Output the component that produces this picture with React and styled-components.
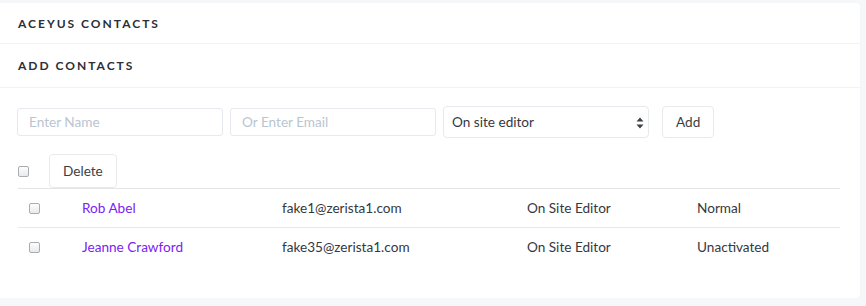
import React from "react";
import styled, { createGlobalStyle } from "styled-components";

const Global = createGlobalStyle`
body {
  margin: 0;
  background: #f5f7f9;
  font-family: Lato, "Open Sans", sans-serif;
  color: #35383f;
}
`;

const Page = styled.div`
padding-top: 3px;
width: 860px;
`;

const Card = styled.div`
background: #ffffff;
border-radius: 0 4px 4px 0;
box-shadow: 0 1px 2px rgba(0, 0, 0, 0.04);
padding-bottom: 32px;
`;

const SectionHead = styled.div`
height: ${({ h }) => h}px;
display: flex;
align-items: center;
padding-left: 18px;
border-bottom: 1px solid #eef3fa;
font-size: 12px;
font-weight: 700;
letter-spacing: 2px;
color: #2b2e36;
`;

const Body = styled.div`
padding: 18px 20px 0 17px;
`;

const FormRow = styled.div`
display: flex;
align-items: center;
gap: 7px;
`;

const Field = styled.input`
width: 206px;
height: 28px;
box-sizing: border-box;
border: 1px solid #e6eaee;
border-radius: 3px;
padding: 0 11px;
font-family: inherit;
font-size: 13.6px;
color: #35383f;
&::placeholder { color: #b9c5d1; }
`;

const SelectBox = styled.div`
position: relative;
width: 206px;
height: 32px;
box-sizing: border-box;
border: 1px solid #e6eaee;
border-radius: 4px;
display: flex;
align-items: center;
padding: 0 8px;
font-size: 13.6px;
color: #35383f;
`;

const Arrows = styled.svg`
position: absolute;
right: 4px;
top: 10px;
`;

const Btn = styled.button`
height: ${({ h }) => h || 32}px;
padding: 0 ${({ px }) => px || 13}px;
margin-left: ${({ ml }) => ml || 0}px;
background: #fff;
border: 1px solid #e8ebee;
border-radius: 4px;
font-family: inherit;
font-size: 13.6px;
color: #3b3e46;
cursor: pointer;
`;

const Toolbar = styled.div`
display: flex;
align-items: center;
margin-top: 16px;
padding-left: 1px;
height: 34px;
`;

const Check = styled.span`
display: inline-block;
width: 9px;
height: 9px;
border: 1px solid #a9adb2;
border-radius: 2px;
background: linear-gradient(#fdfdfd, #e9eaec);
`;

const Table = styled.div`
width: 822px;
margin-left: 1px;
`;

const Row = styled.div`
display: grid;
grid-template-columns: 64px 200px 245px 170px 1fr;
align-items: center;
height: 38px;
border-top: 1px solid ${({ first }) => (first ? "#e2e4e6" : "#e6e8ea")};
font-size: 13.6px;
color: #35383f;
`;

const CheckCell = styled.div`
padding-left: 11px;
display: flex;
align-items: center;
`;

const NameLink = styled.a`
color: #7a22f5;
text-decoration: none;
`;

const contacts = [
  { name: "Rob Abel", email: "fake1@zerista1.com", role: "On Site Editor", status: "Normal" },
  { name: "Jeanne Crawford", email: "fake35@zerista1.com", role: "On Site Editor", status: "Unactivated" },
];

const App = () => (
  <Page>
    <Global />
    <Card>
      <SectionHead h={40}>ACEYUS CONTACTS</SectionHead>
      <SectionHead h={43}>ADD CONTACTS</SectionHead>
      <Body>
        <FormRow>
          <Field placeholder="Enter Name" />
          <Field placeholder="Or Enter Email" />
          <SelectBox>
            On site editor
            <Arrows width="8" height="12" viewBox="0 0 8 12">
              <path d="M4 0.5 L7.5 4.5 H0.5 Z" fill="#3d4048" />
              <path d="M4 11.5 L7.5 7.5 H0.5 Z" fill="#3d4048" />
            </Arrows>
          </SelectBox>
          <Btn ml={6} px={13}>Add</Btn>
        </FormRow>
        <Toolbar>
          <Check />
          <Btn ml={20} h={34} px={13}>Delete</Btn>
        </Toolbar>
        <Table>
          {contacts.map((c, i) => (
            <Row key={c.email} first={i === 0}>
              <CheckCell><Check /></CheckCell>
              <NameLink href="#">{c.name}</NameLink>
              <span>{c.email}</span>
              <span>{c.role}</span>
              <span>{c.status}</span>
            </Row>
          ))}
        </Table>
      </Body>
    </Card>
  </Page>
);

export default App;
